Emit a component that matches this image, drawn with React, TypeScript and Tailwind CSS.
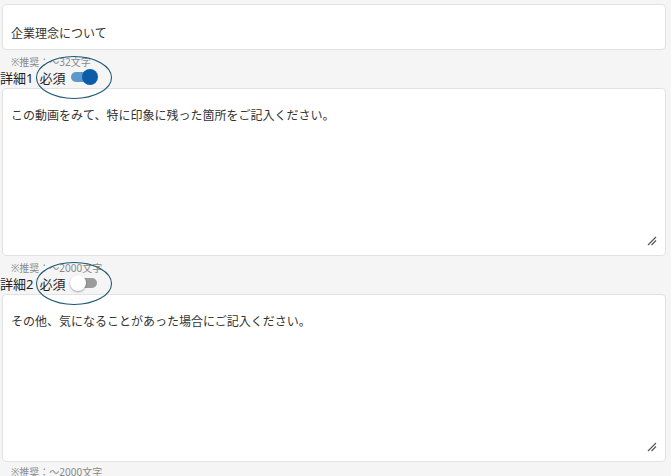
import React from 'react';

const font = { fontFamily: '"Noto Sans", "Noto Sans CJK JP", sans-serif' };

const Toggle = ({ on }: { on: boolean }) => (
  <span className="relative inline-flex items-center w-[28px] h-[16px]">
    <span
      className={
        on
          ? 'absolute left-[1px] right-[1px] h-[10px] rounded-full bg-[#5f98cc]'
          : 'absolute left-[3px] right-[1px] h-[10px] rounded-full bg-[#9b9b9b]'
      }
    />
    {on ? (
      <span className="absolute right-0 w-[16px] h-[16px] rounded-full bg-[#0b5da8]" />
    ) : (
      <span className="absolute left-0 w-[16px] h-[16px] rounded-full bg-white shadow-[0_1px_2px_rgba(0,0,0,0.35)]" />
    )}
  </span>
);

const Ring = () => (
  <svg
    className="absolute left-[35px] top-[-23px] pointer-events-none"
    width="78"
    height="46"
    viewBox="0 0 78 46"
  >
    <ellipse cx="39" cy="22.5" rx="37.5" ry="21" fill="none" stroke="#1d5877" strokeWidth="1.1" />
  </svg>
);

const Hint = ({ text }: { text: string }) => (
  <div className="pl-[9px] text-[10px] leading-[12px] text-[#8a8a8a] h-[12px]">{text}</div>
);

const Label = ({ n, on }: { n: number; on: boolean }) => (
  <div className="relative z-10 flex items-center h-[20px] text-[13px] leading-[16px] text-[#222] ml-[-2px]">
    <span>詳細{n}</span>
    <span className="ml-[6px]">必須</span>
    <span className="ml-[5px]">
      <Toggle on={on} />
    </span>
    <div className="absolute left-0 top-[10px]">
      <Ring />
    </div>
  </div>
);

const Grip = () => (
  <svg
    className="absolute right-[9px] bottom-[10px] pointer-events-none"
    width="10"
    height="10"
    viewBox="0 0 10 10"
  >
    <path d="M1 9 L9 1 M4.5 9 L9 4.5" stroke="#555" strokeWidth="1.1" fill="none" />
  </svg>
);

const Area = ({ value }: { value: string }) => (
  <div className="relative">
    <textarea
      readOnly
      defaultValue={value}
      className="block w-full h-[168px] bg-white border border-[#e2e2e2] rounded-[4px] px-[8px] pt-[18px] pb-[8px] text-[12px] leading-[18px] text-[#333] outline-none resize-none"
      style={font}
    />
    <Grip />
  </div>
);

export default function App() {
  return (
    <div className="min-h-screen bg-[#f5f5f5] pt-[4px] pl-[2px] pr-[5px]" style={font}>
      <div className="h-[46px] bg-white border border-[#e2e2e2] rounded-[4px] px-[8px] pt-[20px] text-[12px] leading-[18px] text-[#333]">
        企業理念について
      </div>
      <div className="mt-[6px]">
        <Hint text="※推奨：～32文字" />
      </div>
      <Label n={1} on={true} />
      <Area value="この動画をみて、特に印象に残った箇所をご記入ください。" />
      <div className="mt-[6px]">
        <Hint text="※推奨：～2000文字" />
      </div>
      <Label n={2} on={false} />
      <Area value="その他、気になることがあった場合にご記入ください。" />
      <div className="mt-[4px]">
        <Hint text="※推奨：～2000文字" />
      </div>
    </div>
  );
}
